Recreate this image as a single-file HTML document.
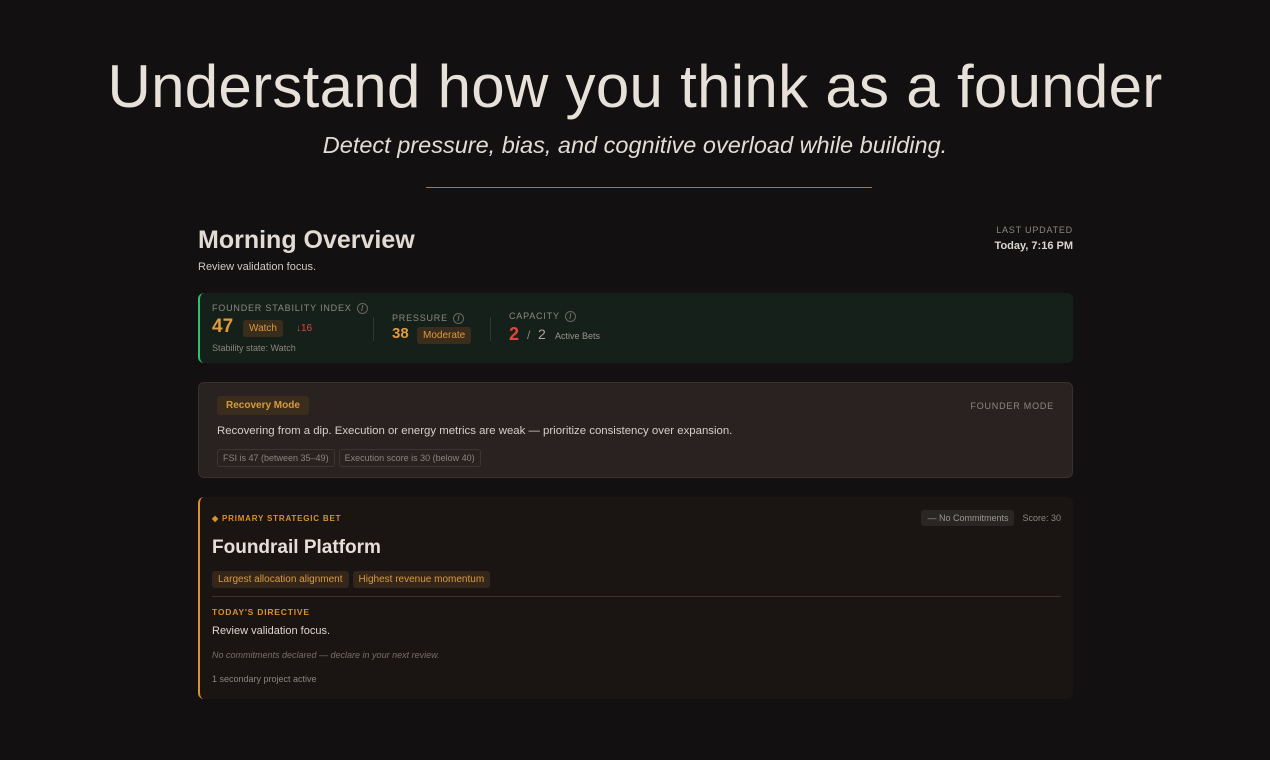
<!DOCTYPE html>
<html><head><meta charset="utf-8"><style>
*{box-sizing:border-box;margin:0;padding:0}
body{width:1270px;height:760px;background:#121010;font-family:"Liberation Sans",sans-serif;color:#e6dfd8;position:relative;overflow:hidden}
.abs{position:absolute}
h1{position:absolute;top:52px;left:0;width:1270px;text-align:center;font-weight:300;font-size:60px;color:#e8e1da;letter-spacing:0.3px}
.sub{top:132px;left:0;width:1270px;text-align:center;font-style:italic;font-size:23.5px;color:#e2dcd6}
.rule{top:187px;left:426px;width:446px;height:1px;background:#a07650}
.lbl{font-size:9px;letter-spacing:0.8px;color:#8d8782;text-transform:uppercase}
.info{display:inline-block;width:11px;height:11px;border:1px solid #6a6560;border-radius:50%;font-size:8px;font-style:italic;text-align:center;line-height:9px;color:#8d8782;vertical-align:middle;margin-left:5px;letter-spacing:0}
.pill{display:inline-block;background:#3a2d1c;color:#d99a3e;border-radius:3px;font-size:10px;padding:3px 6px}
.card{position:absolute;left:198px;width:875px;border-radius:6px}
.chip{display:inline-block;border:1px solid #3c3531;border-radius:3px;font-size:9px;color:#8b837e;padding:3px 5px;margin-right:4px}
</style></head><body>
<h1>Understand how you think as a founder</h1>
<div class="abs sub">Detect pressure, bias, and cognitive overload while building.</div>
<div class="abs rule"></div>

<div class="abs" style="left:198px;top:226px;font-size:25px;font-weight:bold;color:#e2dbd4">Morning Overview</div>
<div class="abs" style="left:198px;top:261px;font-size:11px;color:#cfc8c2">Review validation focus.</div>
<div class="abs lbl" style="right:197px;top:225px">Last Updated</div>
<div class="abs" style="right:197px;top:240px;font-size:11px;font-weight:bold;color:#dcd5cf">Today, 7:16 PM</div>

<div class="card" style="top:293px;height:70px;background:#15201a;border-left:2px solid #2fc26a">
  <div class="abs lbl" style="left:12px;top:10px">Founder Stability Index<span class="info">i</span></div>
  <div class="abs" style="left:12px;top:23px;font-size:19px;font-weight:bold;color:#e09a3e">47</div>
  <div class="abs pill" style="left:43px;top:27px">Watch</div>
  <div class="abs" style="left:96px;top:30px;font-size:10px;color:#e0463c">↓16</div>
  <div class="abs" style="left:12px;top:50px;font-size:9px;color:#8b8580">Stability state: Watch</div>
  <div class="abs" style="left:173px;top:24px;width:1px;height:24px;background:#2d3a32"></div>
  <div class="abs lbl" style="left:192px;top:20px">Pressure<span class="info">i</span></div>
  <div class="abs" style="left:192px;top:32px;font-size:15px;font-weight:bold;color:#e09a3e">38</div>
  <div class="abs pill" style="left:217px;top:34px">Moderate</div>
  <div class="abs" style="left:290px;top:24px;width:1px;height:24px;background:#2d3a32"></div>
  <div class="abs lbl" style="left:309px;top:18px">Capacity<span class="info">i</span></div>
  <div class="abs" style="left:309px;top:31px;font-size:18px;font-weight:bold;color:#e0463c">2</div>
  <div class="abs" style="left:327px;top:35px;font-size:12px;color:#8b8580">/</div>
  <div class="abs" style="left:338px;top:33px;font-size:14px;color:#aaa39e">2</div>
  <div class="abs" style="left:355px;top:38px;font-size:9px;color:#9a938e">Active Bets</div>
</div>

<div class="card" style="top:382px;height:96px;background:#2a2220;border:1px solid #3a312d">
  <div class="abs pill" style="left:18px;top:13px;font-size:10px;padding:4px 9px;font-weight:bold">Recovery Mode</div>
  <div class="abs lbl" style="right:18px;top:18px">Founder Mode</div>
  <div class="abs" style="left:18px;top:42px;font-size:11.4px;color:#d6cfca">Recovering from a dip. Execution or energy metrics are weak — prioritize consistency over expansion.</div>
  <div class="abs" style="left:18px;top:65px"><span class="chip">FSI is 47 (between 35–49)</span><span class="chip">Execution score is 30 (below 40)</span></div>
</div>

<div class="card" style="top:497px;height:202px;background:#1a1512;border-left:2px solid #d9902e">
  <div class="abs" style="left:12px;top:17px;font-size:8px;font-weight:bold;letter-spacing:0.8px;color:#d9902e">◆ PRIMARY STRATEGIC BET</div>
  <div class="abs" style="right:12px;top:16px;font-size:9px;color:#8b8580"><span style="background:#2a2624;color:#9a9590;padding:3px 6px;border-radius:3px;margin-right:8px">— No Commitments</span>Score: 30</div>
  <div class="abs" style="left:12px;top:40px;font-size:19px;font-weight:bold;color:#e6dfd8">Foundrail Platform</div>
  <div class="abs" style="left:12px;top:72px"><span class="pill" style="background:#34261a;margin-right:4px">Largest allocation alignment</span><span class="pill" style="background:#34261a">Highest revenue momentum</span></div>
  <div class="abs" style="left:12px;top:99px;width:849px;height:1px;background:#3a322c"></div>
  <div class="abs" style="left:12px;top:110px;font-size:8.5px;font-weight:bold;letter-spacing:0.8px;color:#d9902e">TODAY'S DIRECTIVE</div>
  <div class="abs" style="left:12px;top:128px;font-size:11px;color:#ddd6d0">Review validation focus.</div>
  <div class="abs" style="left:12px;top:153px;font-size:9px;font-style:italic;color:#77706b">No commitments declared — declare in your next review.</div>
  <div class="abs" style="left:12px;top:177px;font-size:9px;color:#8b8580">1 secondary project active</div>
</div>
</body></html>
